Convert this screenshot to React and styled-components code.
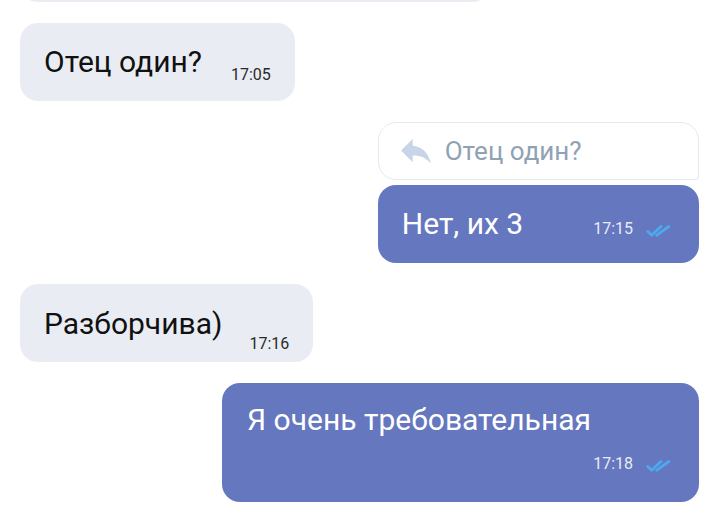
import React from 'react';
import styled, { createGlobalStyle } from 'styled-components';

const Global = createGlobalStyle`
  html, body {
    margin: 0;
    padding: 0;
    background: #ffffff;
    overflow: hidden;
  }
  body {
    font-family: Roboto, "Noto Sans", sans-serif;
    -webkit-font-smoothing: antialiased;
  }
`;

const Feed = styled.div`
  display: flex;
  flex-direction: column;
  gap: 21px;
  padding: 0 21px 0 20px;
  margin-top: -76px;
  width: 720px;
  box-sizing: border-box;
`;

const Row = styled.div`
  display: flex;
  justify-content: ${(p) => (p.$out ? 'flex-end' : 'flex-start')};
`;

const Bubble = styled.div`
  display: flex;
  align-items: flex-start;
  box-sizing: border-box;
  height: 78px;
  padding: ${(p) => p.$pad || '21px 24px 0'};
  border-radius: 18px;
  background: ${(p) => (p.$out ? '#6577be' : '#e9edf3')};
  color: ${(p) => (p.$out ? '#ffffff' : '#111111')};
`;

const Stack = styled.div`
  display: flex;
  flex-direction: column;
  box-sizing: border-box;
  padding: 19px 27px 29px 25px;
  border-radius: 18px;
  background: #6577be;
  color: #ffffff;
`;

const Text = styled.div`
  font-size: 30px;
  line-height: 36px;
  white-space: nowrap;
  padding-right: ${(p) => p.$room || 0}px;
`;

const Meta = styled.div`
  display: flex;
  align-items: center;
  gap: 13px;
  margin-left: ${(p) => p.$gap || 0}px;
  margin-top: ${(p) => p.$top || 0}px;
  align-self: ${(p) => (p.$end ? 'flex-end' : 'auto')};
  font-size: 16px;
  line-height: 18px;
  color: ${(p) => (p.$out ? '#e8ebf7' : '#2a2a2a')};
`;

const Group = styled.div`
  display: flex;
  flex-direction: column;
  align-items: stretch;
  gap: 5px;
`;

const Quote = styled.div`
  display: flex;
  align-items: center;
  gap: 14px;
  height: 58px;
  box-sizing: border-box;
  padding: 0 22px;
  border: 1.5px solid #e4e9ef;
  border-radius: 18px 18px 4px 18px;
  background: #ffffff;
  color: #8fa2b4;
  font-size: 26px;
`;

const Checks = () => (
  <svg width="26" height="14" viewBox="0 0 26 14" fill="none" style={{ marginTop: 4 }}>
    <path d="M1.8 7.5 L5.6 11.3 L15 2.5" stroke="#4ea8ee" strokeWidth="2.8" strokeLinecap="round" strokeLinejoin="round" />
    <path d="M10.5 11.3 L22.8 2.5" stroke="#4ea8ee" strokeWidth="2.8" strokeLinecap="round" strokeLinejoin="round" />
  </svg>
);

const ReplyIcon = () => (
  <svg width="30" height="24" viewBox="3 5 18 14.5" fill="#c8d5e6">
    <path d="M10 9V5l-7 7 7 7v-4.1c5 0 8.5 1.6 11 5.1-1-5-4-10-11-11z" />
  </svg>
);

export default function App() {
  return (
    <>
      <Global />
      <Feed>
        <Row>
          <Bubble style={{ width: 470 }} />
        </Row>
        <Row>
          <Bubble>
            <Text>Отец один?</Text>
            <Meta $gap={29} $top={22}>17:05</Meta>
          </Bubble>
        </Row>
        <Row $out>
          <Group>
            <Quote>
              <ReplyIcon />
              Отец один?
            </Quote>
            <Bubble $out $pad="21px 27px 0 24px">
              <Text>Нет, их 3</Text>
              <Meta $out $gap={70} $top={14}>
                17:15
                <Checks />
              </Meta>
            </Bubble>
          </Group>
        </Row>
        <Row>
          <Bubble $pad="22px 24px 0">
            <Text>Разборчива)</Text>
            <Meta $gap={27} $top={29}>17:16</Meta>
          </Bubble>
        </Row>
        <Row $out>
          <Stack>
            <Text $room={81}>Я очень требовательная</Text>
            <Meta $out $end $top={17}>
              17:18
              <Checks />
            </Meta>
          </Stack>
        </Row>
      </Feed>
    </>
  );
}
